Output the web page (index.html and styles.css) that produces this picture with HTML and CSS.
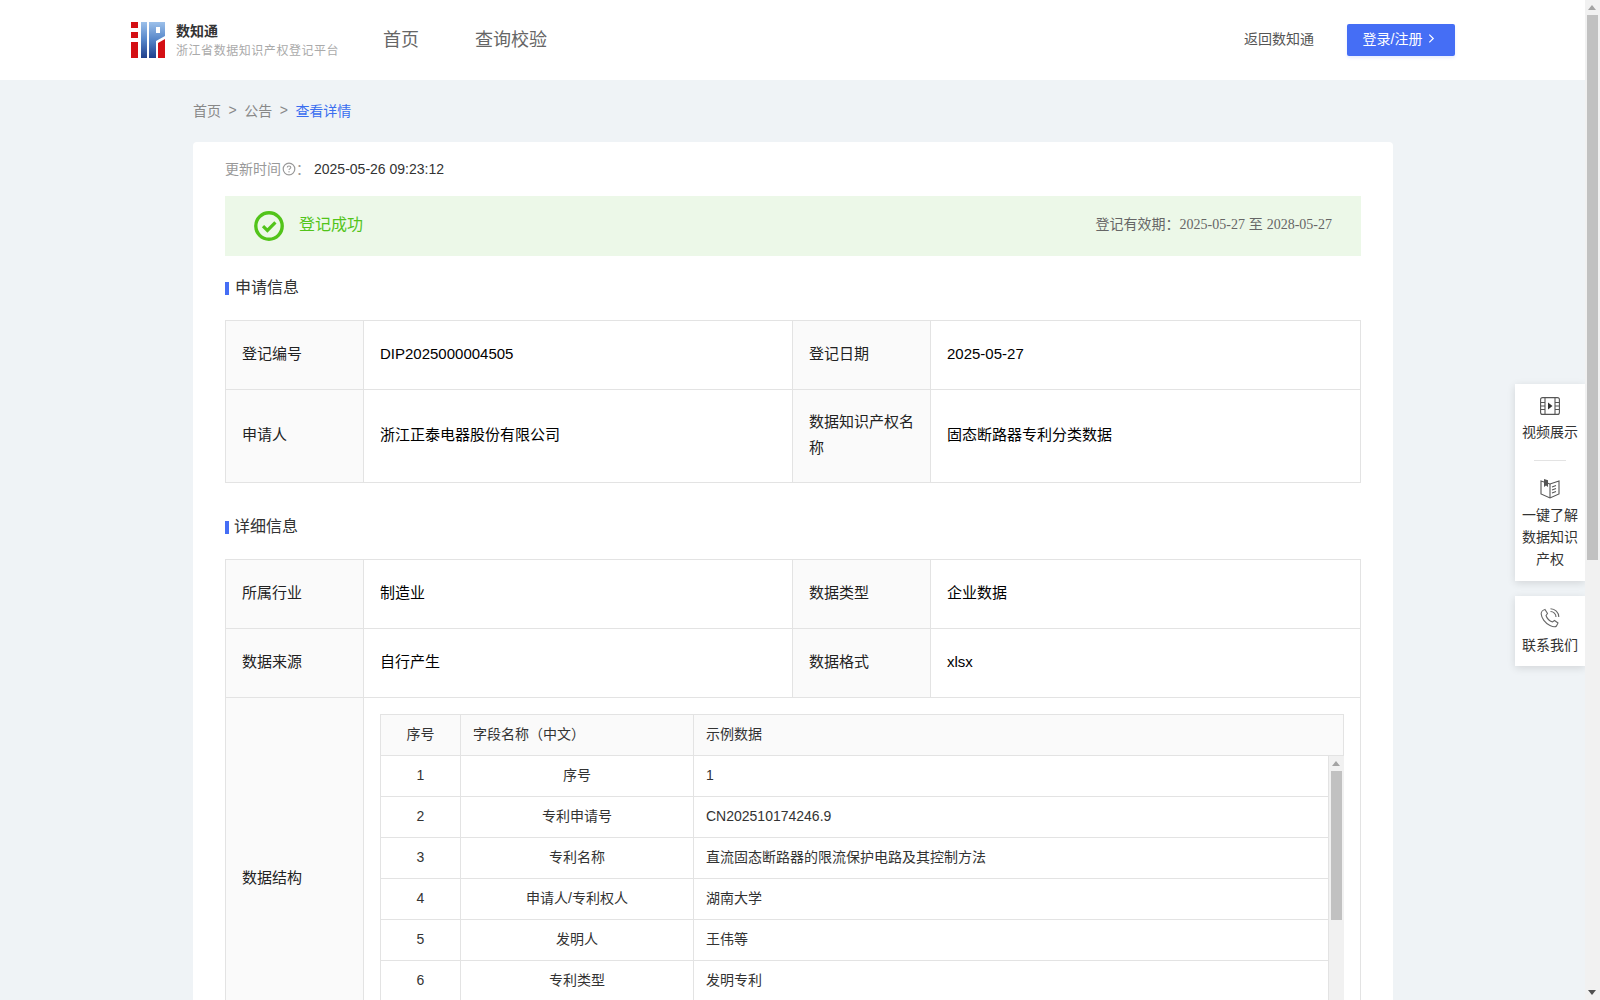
FILE: index.html
```html
<!DOCTYPE html>
<html lang="zh-CN">
<head>
    <meta charset="UTF-8">
    <meta name="viewport" content="width=device-width, initial-scale=1.0">
    <title>数知通 - 查看详情</title>
    <link rel="stylesheet" href="styles.css">
</head>
<body>

<div class="page">
    <div class="viewport">
        <header class="header">
            <div class="brand">
                <svg class="logo" viewBox="0 0 34 36" width="34" height="36">
                    <defs>
                        <linearGradient id="logoBlue" x1="0" y1="0" x2="0" y2="1">
                            <stop offset="0" stop-color="#9cc0ea"/>
                            <stop offset="0.5" stop-color="#5585c8"/>
                            <stop offset="1" stop-color="#1f3f8c"/>
                        </linearGradient>
                    </defs>
                    <rect x="0" y="0" width="7" height="6" fill="#d40f14"/>
                    <rect x="0" y="10" width="7" height="6" fill="#d40f14"/>
                    <rect x="0" y="20" width="7" height="16" fill="#d40f14"/>
                    <rect x="10" y="0" width="6" height="36" fill="url(#logoBlue)"/>
                    <path d="M18 0H34V14L25 19V36H18Z M25 5V11H29V5Z" fill="url(#logoBlue)" fill-rule="evenodd"/>
                    <path d="M27 21L34 17V36H27Z" fill="#d40f14"/>
                </svg>
                <div class="brand-text">
                    <div class="brand-title">数知通</div>
                    <div class="brand-sub">浙江省数据知识产权登记平台</div>
                </div>
            </div>
            <nav class="nav">
                <a class="nav-item">首页</a>
                <a class="nav-item">查询校验</a>
            </nav>
            <a class="back-link">返回数知通</a>
            <button class="login-btn">登录/注册
                <svg viewBox="0 0 8 12" width="7" height="11"><path d="M1.5 1.5L6 6L1.5 10.5" fill="none" stroke="#fff" stroke-width="1.4"/></svg>
            </button>
        </header>

        <main class="main">
            <div class="breadcrumb">
                <span>首页</span><span class="sep">&gt;</span><span>公告</span><span class="sep">&gt;</span><span class="current">查看详情</span>
            </div>

            <section class="card">
                <div class="update-line">
                    <span class="update-label">更新时间</span>
                    <svg class="help-icon" viewBox="0 0 14 14" width="14" height="14">
                        <circle cx="7" cy="7" r="5.8" fill="none" stroke="#999" stroke-width="1.2"/>
                        <path d="M5.2 5.6C5.2 4.6 6 4 7 4C8 4 8.8 4.6 8.8 5.5C8.8 6.6 7 6.7 7 8.1" fill="none" stroke="#999" stroke-width="1.1"/>
                        <rect x="6.4" y="9.2" width="1.2" height="1.2" fill="#999"/>
                    </svg>
                    <span class="update-label">：</span>
                    <span class="update-value">2025-05-26 09:23:12</span>
                </div>

                <div class="status-banner">
                    <svg class="status-icon" viewBox="0 0 30 30" width="30" height="30">
                        <circle cx="15" cy="15" r="13.2" fill="none" stroke="#52c41a" stroke-width="3.4"/>
                        <path d="M9 15.2L13.4 19.4L21.4 11.4" fill="none" stroke="#52c41a" stroke-width="3.2"/>
                    </svg>
                    <span class="status-text">登记成功</span>
                    <span class="status-valid">登记有效期：<span class="serif">2025-05-27</span> 至 <span class="serif">2028-05-27</span></span>
                </div>

                <h3 class="section-title">申请信息</h3>
                <table class="info-table">
                    <colgroup><col class="col-label"><col class="col-value"><col class="col-label"><col></colgroup>
                    <tr class="row-short">
                        <th>登记编号</th><td>DIP2025000004505</td>
                        <th>登记日期</th><td>2025-05-27</td>
                    </tr>
                    <tr class="row-tall">
                        <th>申请人</th><td>浙江正泰电器股份有限公司</td>
                        <th>数据知识产权名称</th><td>固态断路器专利分类数据</td>
                    </tr>
                </table>

                <h3 class="section-title section-title-second">详细信息</h3>
                <table class="info-table">
                    <colgroup><col class="col-label"><col class="col-value"><col class="col-label"><col></colgroup>
                    <tr class="row-short">
                        <th>所属行业</th><td>制造业</td>
                        <th>数据类型</th><td>企业数据</td>
                    </tr>
                    <tr class="row-short">
                        <th>数据来源</th><td>自行产生</td>
                        <th>数据格式</th><td>xlsx</td>
                    </tr>
                    <tr>
                        <th>数据结构</th>
                        <td colspan="3" class="structure-cell">
                            <div class="fields">
                                <div class="fields-head">
                                    <div class="cell-no">序号</div>
                                    <div class="cell-name">字段名称（中文）</div>
                                    <div class="cell-sample">示例数据</div>
                                </div>
                                <div class="fields-body">
                                    <div class="fields-rows">
                                        <div class="fields-row"><div class="cell-no">1</div><div class="cell-name">序号</div><div class="cell-sample">1</div></div>
                                        <div class="fields-row"><div class="cell-no">2</div><div class="cell-name">专利申请号</div><div class="cell-sample">CN202510174246.9</div></div>
                                        <div class="fields-row"><div class="cell-no">3</div><div class="cell-name">专利名称</div><div class="cell-sample">直流固态断路器的限流保护电路及其控制方法</div></div>
                                        <div class="fields-row"><div class="cell-no">4</div><div class="cell-name">申请人/专利权人</div><div class="cell-sample">湖南大学</div></div>
                                        <div class="fields-row"><div class="cell-no">5</div><div class="cell-name">发明人</div><div class="cell-sample">王伟等</div></div>
                                        <div class="fields-row"><div class="cell-no">6</div><div class="cell-name">专利类型</div><div class="cell-sample">发明专利</div></div>
                                    </div>
                                    <div class="scrollbar scrollbar-inner">
                                        <span class="arrow-up"></span>
                                        <span class="thumb"></span>
                                    </div>
                                </div>
                            </div>
                        </td>
                    </tr>
                </table>
            </section>
        </main>

        <!-- floating side tools -->
        <aside class="side-tools">
            <div class="side-box">
                <div class="side-item">
                    <svg viewBox="0 0 20 18" width="20" height="18" fill="none" stroke="#555" stroke-width="1.1">
                        <rect x="0.6" y="0.6" width="18.8" height="16.8" rx="2"/>
                        <path d="M5 1V17M15 1V17M1 5.5H5M1 9H5M1 12.5H5M15 5.5H19M15 9H19M15 12.5H19"/>
                        <path d="M8 5.5L12.5 9L8 12.5Z" fill="#333" stroke="none"/>
                    </svg>
                    <span>视频展示</span>
                </div>
                <div class="side-divider"></div>
                <div class="side-item side-item-book">
                    <svg viewBox="0 0 20 21" width="20" height="21" fill="none" stroke="#555" stroke-width="1.1">
                        <path d="M1 3L10 6L19 3V16L10 20L1 16Z"/>
                        <path d="M10 6V20"/>
                        <path d="M4 1V9L6 7.5L8 9V2.2Z" fill="#555" stroke="none"/>
                        <path d="M12 9L16 7.5M12 12L16 10.5M12 15L16 13.5"/>
                    </svg>
                    <span>一键了解<br>数据知识<br>产权</span>
                </div>
            </div>
            <div class="side-box side-box-contact">
                <div class="side-item">
                    <svg viewBox="0 0 20 20" width="20" height="20" fill="none" stroke="#666" stroke-width="1.1">
                        <path d="M5 1.5L7.5 5.5L6 7.5C6.8 10 9.5 13 12.5 14L14.5 12.5L18 15L16.5 18C15.5 19 13 19 10 17.5C5 15 1.5 10 1.2 6C1 4 3 2 5 1.5Z"/>
                        <path d="M10.5 3.5C13.5 3.5 16 6 16 9M10.5 0.8C15 0.8 18.8 4.5 18.8 9"/>
                    </svg>
                    <span>联系我们</span>
                </div>
            </div>
        </aside>
    </div>

    <div class="scrollbar scrollbar-page">
        <span class="arrow-up"></span>
        <span class="thumb"></span>
        <span class="arrow-down"></span>
    </div>
</div>

</body>
</html>
```

FILE: styles.css
```css
* {
    box-sizing: border-box;
}
html, body {
    margin: 0;
    height: 100%;
    overflow: hidden;
}
body {
    font-family: "Liberation Sans", "Noto Sans CJK SC", sans-serif;
    font-size: 14px;
    color: #333;
    background: #eff3f6;
}
.page {
    display: flex;
    height: 100vh;
}
.viewport {
    flex: 1;
    min-width: 0;
    position: relative;
    overflow: hidden;
}

/* header */
.header {
    display: flex;
    align-items: center;
    height: 80px;
    padding: 0 130px 0 131px;
    background: #fff;
}
.brand {
    display: flex;
    align-items: center;
    gap: 11px;
    width: 252px;
}
.logo {
    display: block;
}
.brand-text {
    padding-top: 2px;
}
.brand-title {
    font-size: 14px;
    font-weight: bold;
    line-height: 20px;
    color: #333;
}
.brand-sub {
    font-size: 12px;
    letter-spacing: 0.55px;
    line-height: 21px;
    color: #aaa;
    white-space: nowrap;
}
.nav {
    display: flex;
    gap: 56px;
    flex: 1;
    padding-bottom: 4px;
}
.nav-item {
    font-size: 18px;
    color: #666;
}
.back-link {
    margin-right: 33px;
    padding-bottom: 4px;
    color: #555;
}
.login-btn {
    display: flex;
    align-items: center;
    justify-content: center;
    gap: 6px;
    width: 108px;
    height: 32px;
    padding: 0 4px 4px 0;
    border: none;
    border-radius: 2px;
    background: #456ef5;
    box-shadow: 0 2px 3px rgba(69, 110, 245, 0.12);
    color: #fff;
    font-family: inherit;
    font-size: 14px;
}

/* breadcrumb */
.main {
    padding: 0 192px 0 193px;
}
.breadcrumb {
    display: flex;
    align-items: center;
    height: 62px;
    padding-bottom: 2px;
    color: #888;
}
.sep {
    margin: 0 7.5px;
}
.current {
    color: #3a6ef0;
}

/* card */
.card {
    padding: 16px 32px 40px;
    border-radius: 4px;
    background: #fff;
}
.update-line {
    display: flex;
    align-items: center;
    height: 22px;
}
.update-label {
    padding-bottom: 2px;
    color: #999;
}
.help-icon {
    margin-left: 1px;
}
.update-value {
    margin-left: 4px;
    color: #333;
}
.status-banner {
    display: flex;
    align-items: center;
    height: 60px;
    margin-top: 16px;
    padding: 0 29px;
    background: #ecf8e8;
}
.status-text {
    flex: 1;
    margin-left: 15px;
    padding-bottom: 6px;
    font-size: 16px;
    color: #52c41a;
}
.status-valid {
    padding-bottom: 6px;
    color: #666;
}
.serif {
    font-family: "Liberation Serif", serif;
}
.section-title {
    position: relative;
    margin: 21px 0 21px;
    padding-left: 10px;
    font-size: 16px;
    font-weight: normal;
    line-height: 22px;
    color: #333;
}
.section-title::before {
    content: "";
    position: absolute;
    left: 0;
    top: 5px;
    width: 4px;
    height: 13px;
    background: #456ef5;
}
.section-title-second {
    margin-top: 33px;
    padding-left: 9px;
}

/* info tables */
.info-table {
    width: 100%;
    border-collapse: collapse;
    table-layout: fixed;
    border: 1px solid #e3e3e3;
    font-size: 15px;
    color: #000;
}
.info-table th, .info-table > tbody > tr > td {
    border: 1px solid #e3e3e3;
    padding: 0 15px 2px 16px;
    font-weight: normal;
    text-align: left;
    line-height: 26px;
}
.info-table th {
    background: #fafafa;
    color: #222;
}
.col-label {
    width: 138px;
}
.col-value {
    width: 429px;
}
.row-short {
    height: 69px;
}
.row-tall {
    height: 93px;
}
.info-table > tbody > tr > .structure-cell {
    padding: 16px;
    font-size: 14px;
}

/* field list inside the data structure row */
.fields {
    color: #333;
}
.fields-head, .fields-row {
    display: grid;
    grid-template-columns: 80px 233px 1fr;
    height: 41px;
    line-height: 38px;
}
.fields-head {
    height: 42px;
    border: 1px solid #e3e3e3;
    background: #fafafa;
}
.fields-body {
    display: flex;
    height: 287px;
    border-left: 1px solid #e3e3e3;
    overflow: hidden;
}
.fields-rows {
    flex: 1;
}
.fields-row {
    border-bottom: 1px solid #e3e3e3;
    border-right: 1px solid #e3e3e3;
}
.cell-no {
    text-align: center;
    border-right: 1px solid #e3e3e3;
}
.cell-name {
    text-align: center;
    border-right: 1px solid #e3e3e3;
}
.cell-sample {
    padding-left: 12px;
}
.fields-head .cell-name {
    padding-left: 12px;
    text-align: left;
}

/* scrollbars */
.scrollbar {
    display: flex;
    flex-direction: column;
    align-items: center;
    flex: none;
    width: 15px;
    background: #f1f1f1;
    position: relative;
}
.thumb {
    display: block;
    width: 11px;
    background: #c1c1c1;
}
.arrow-up, .arrow-down {
    position: absolute;
    left: 3px;
    width: 0;
    height: 0;
    border-left: 4.5px solid transparent;
    border-right: 4.5px solid transparent;
}
.arrow-up {
    top: 5px;
    border-bottom: 5px solid #a3a3a3;
}
.arrow-down {
    bottom: 5px;
    border-top: 5px solid #505050;
}
.scrollbar-page {
    height: 100vh;
}
.scrollbar-page .thumb {
    height: 545px;
    margin-top: 15px;
}
.scrollbar-inner .thumb {
    height: 149px;
    margin-top: 15px;
}

/* side tools */
.side-tools {
    position: absolute;
    right: 0;
    top: 384px;
    display: flex;
    flex-direction: column;
    gap: 15px;
    width: 70px;
    font-size: 14px;
    color: #333;
}
.side-box {
    padding: 13px 0 11px;
    background: #fff;
    box-shadow: 0 2px 8px rgba(0, 0, 0, 0.12);
    text-align: center;
}
.side-box-contact {
    padding: 12px 0 10px;
}
.side-item {
    display: flex;
    flex-direction: column;
    align-items: center;
    gap: 6px;
    line-height: 22px;
}
.side-item-book {
    gap: 5px;
}
.side-divider {
    width: 32px;
    height: 1px;
    margin: 17px auto;
    background: #e3e3e3;
}
```
